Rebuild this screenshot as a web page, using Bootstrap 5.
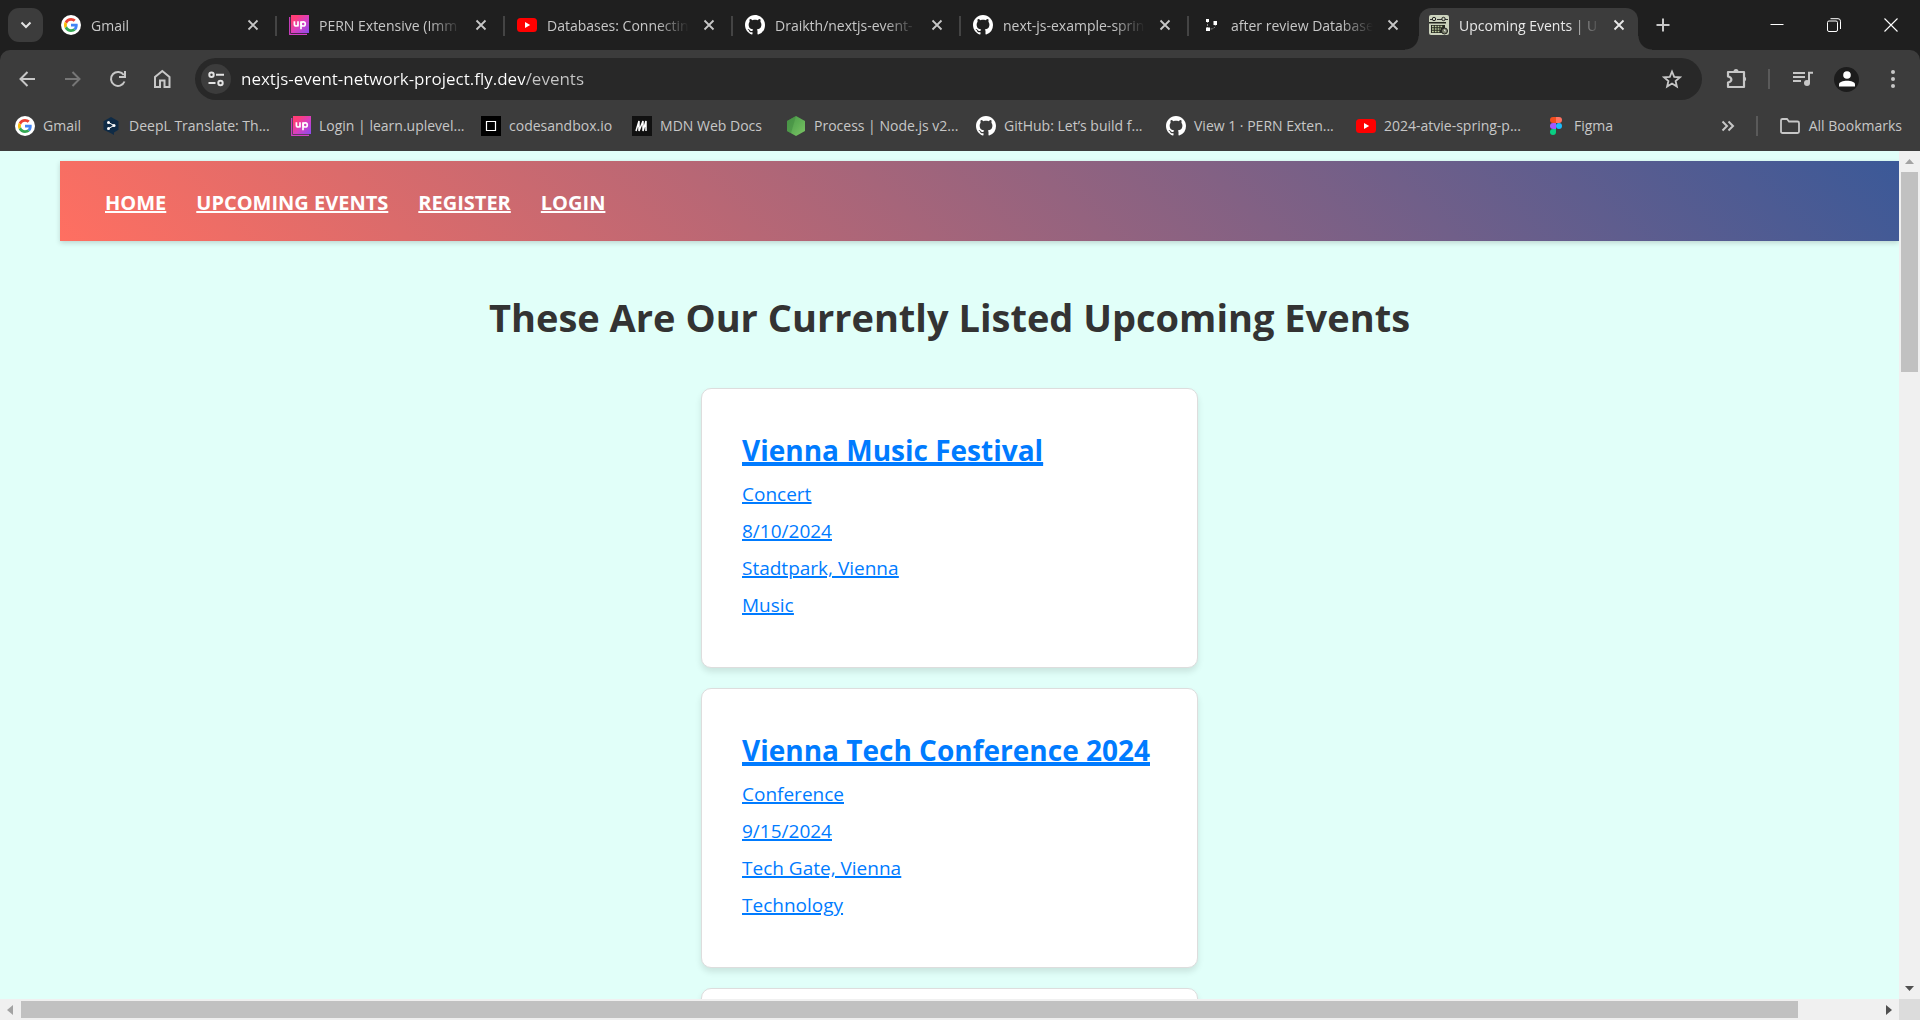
<!DOCTYPE html>
<html lang="en">
<head>
<meta charset="utf-8">
<meta name="viewport" content="width=device-width, initial-scale=1">
<title>Upcoming Events</title>
<link href="https://cdn.jsdelivr.net/npm/bootstrap@5.3.0/dist/css/bootstrap.min.css" rel="stylesheet">
<style>
  body { font-family: "Open Sans", "Noto Sans", sans-serif; background: #1f1f1f; }
  button { padding: 0; border: 0; background: none; color: inherit; }
  svg { display: block; flex: none; }

  /* tab strip */
  .tab-strip { height: 50px; padding-left: 8px; color: #c7c7c7; font-size: 14px; }
  .tab-search { width: 35px; height: 34px; border-radius: 11px; background: #3c3c3c; margin-right: 8px; }
  .tabs { min-width: 0; }
  .chrome-tab { width: 228px; min-width: 0; height: 42px; padding: 0 20px 0 10px; position: relative; }
  .chrome-tab .tab-label { mask-image: linear-gradient(to right, #000 110px, transparent 142px); -webkit-mask-image: linear-gradient(to right, #000 110px, transparent 142px); }
  .chrome-tab::after { content: ""; position: absolute; right: 2px; top: 8px; width: 2px; height: 20px; background: #444; }
  .chrome-tab.before-current::after { display: none; }
  .chrome-tab.current { width: 219px; padding-right: 13px; background: #3c3c3c; color: #e8e8e8; border-radius: 12px 12px 0 0; }
  .chrome-tab.current::before, .chrome-tab.current::after { content: ""; position: absolute; top: auto; bottom: 0; width: 14px; height: 14px; }
  .chrome-tab.current::before { left: -14px; background: radial-gradient(circle at 0 0, transparent 13px, #3c3c3c 14px); }
  .chrome-tab.current::after { right: -14px; background: radial-gradient(circle at 100% 0, transparent 13px, #3c3c3c 14px); }
  .tab-row { height: 26px; margin-bottom: 8px; gap: 10px; }
  .new-tab { margin-left: 18px; }
  .win-buttons { gap: 43px; padding-right: 22px; color: #fff; }

  /* toolbar */
  .toolbar { background: #3c3c3c; border-radius: 10px 10px 0 0; color: #c7c7c7; }
  .address-row { height: 58px; padding: 0 19px 0 16px; }
  .nav-buttons { gap: 23px; margin-right: 22px; }
  .omnibox { height: 42px; border-radius: 21px; background: #282828; padding: 0 20px 0 6px; }
  .site-info { width: 30px; height: 30px; border-radius: 50%; background: #3c3c3c; margin-right: 10px; }
  .url-field { border: 0; outline: 0; padding: 0; min-width: 0; font-size: 17px; color: transparent;
    background: linear-gradient(to right, #fff 284px, #c7c7c7 284px); -webkit-background-clip: text; background-clip: text; }
  .tool-sep { width: 2px; height: 20px; background: #5a5a5a; }
  .tool-icons { margin-left: 24px; }
  .tool-icons .tool-sep { margin: 0 23px 0 20px; }
  .avatar { width: 25px; height: 25px; border-radius: 50%; background: #1c1c1c; margin: 0 26px 0 21px; }
  .bookmarks { height: 43px; padding: 0 18px 8px 15px; gap: 20px; font-size: 14px; }
  .bookmarks a { color: #c7c7c7; gap: 8px; }
  .long-label { width: 142px; }
  .bookmark-end { gap: 21px; }

  /* page */
  .page-view { background: #e1fff9; min-height: 0; }
  .site-nav { margin: 10px 0 0 60px; height: 80px; padding: 4px 45px 0; gap: 30px;
    background: linear-gradient(45deg, #ff6f61, #3b5998); box-shadow: 0 2px 5px rgba(0,0,0,.16); }
  .site-nav a { color: #fff; font-weight: 700; font-size: 20px; text-decoration-thickness: 2px; }
  .page-title { color: #333; font-size: 38px; font-weight: 700; line-height: 48px; margin: 52px 0 47px; }
  .event-list { gap: 20px; }
  .event-card { width: 497px; height: 280px; padding: 38px 40px; background: #fff; border: 1px solid #ddd; border-radius: 10px;
    box-shadow: 0 4px 6px rgba(0,0,0,.1); color: #007bff; font-size: 19px; line-height: 37px; text-decoration-thickness: 2px; }
  .event-card h2 { font-size: 28px; font-weight: 700; line-height: 46px; margin-bottom: 3px; text-decoration: underline 3px; }
  .event-card div { text-decoration: underline 2px; }

  /* scrollbars */
  .scroll-v { width: 21px; background: #f0f0f0; padding: 8px 0; }
  .scroll-v .thumb { width: 17px; height: 24%; background: #c1c1c1; }
  .scroll-h { height: 21px; background: #f0f0f0; }
  .scroll-h .track { padding: 0 7px; }
  .scroll-h .thumb-rail { height: 17px; padding-right: 80px; margin: 0 8px; }
  .scroll-h .thumb { background: #c1c1c1; }
  .scroll-corner { width: 21px; background: #dcdcdc; }
</style>
<script src="https://cdn.jsdelivr.net/npm/bootstrap@5.3.0/dist/js/bootstrap.bundle.min.js"></script>
</head>
<body class="d-flex flex-column vh-100 overflow-hidden">

<svg width="0" height="0" class="position-absolute" aria-hidden="true">
  <defs>
    <linearGradient id="upFill" x1="0" y1="0" x2="1" y2="1"><stop offset=".2" stop-color="#ff3d78"/><stop offset=".55" stop-color="#d83fc0"/><stop offset="1" stop-color="#8a4df0"/></linearGradient>
    <linearGradient id="nodeFill" x1="0" y1="0" x2="1" y2="1"><stop offset="0" stop-color="#4b9a48"/><stop offset=".5" stop-color="#5fae55"/><stop offset="1" stop-color="#7cc465"/></linearGradient>
  </defs>
  <symbol id="google" viewBox="0 0 20 20"><circle cx="10" cy="10" r="10" fill="#fff"/>
    <g transform="translate(3 3) scale(.2917)"><path fill="#EA4335" d="M24 9.5c3.54 0 6.71 1.22 9.21 3.6l6.85-6.85C35.9 2.38 30.47 0 24 0 14.62 0 6.51 5.38 2.56 13.22l7.98 6.19C12.43 13.72 17.74 9.5 24 9.5z"/><path fill="#4285F4" d="M46.98 24.55c0-1.57-.15-3.09-.38-4.55H24v9.02h12.94c-.58 2.96-2.26 5.48-4.78 7.18l7.73 6c4.51-4.18 7.09-10.36 7.09-17.65z"/><path fill="#FBBC05" d="M10.53 28.59c-.48-1.45-.76-2.99-.76-4.59s.27-3.14.76-4.59l-7.98-6.19C.92 16.46 0 20.12 0 24c0 3.88.92 7.54 2.56 10.78l7.97-6.19z"/><path fill="#34A853" d="M24 48c6.48 0 11.93-2.13 15.89-5.81l-7.73-6c-2.15 1.45-4.92 2.3-8.16 2.3-6.26 0-11.57-4.22-13.47-9.91l-7.98 6.19C6.51 42.62 14.62 48 24 48z"/></g></symbol>
  <symbol id="github" viewBox="0 0 16 16"><path fill="#fff" d="M8 0C3.58 0 0 3.58 0 8c0 3.54 2.29 6.53 5.47 7.59.4.07.55-.17.55-.38 0-.19-.01-.82-.01-1.49-2.01.37-2.53-.49-2.69-.94-.09-.23-.48-.94-.82-1.13-.28-.15-.68-.52-.01-.53.63-.01 1.08.58 1.23.82.72 1.21 1.87.87 2.33.66.07-.52.28-.87.51-1.07-1.78-.2-3.64-.89-3.64-3.95 0-.87.31-1.59.82-2.15-.08-.2-.36-1.02.08-2.12 0 0 .67-.21 2.2.82.64-.18 1.32-.27 2-.27s1.36.09 2 .27c1.53-1.04 2.2-.82 2.2-.82.44 1.1.16 1.92.08 2.12.51.56.82 1.27.82 2.15 0 3.07-1.87 3.75-3.65 3.95.29.25.54.73.54 1.48 0 1.07-.01 1.93-.01 2.2 0 .21.15.46.55.38A8.01 8.01 0 0 0 16 8c0-4.42-3.58-8-8-8z"/></symbol>
  <symbol id="uplevel" viewBox="0 0 20 20"><path d="M.7 2v17.3H18" fill="none" stroke="#d43fc8" stroke-width="1.2"/><path fill="url(#upFill)" d="M2 0h18v18H2z"/><g fill="none" stroke="#fff" stroke-width="1.7"><path d="M5.4 6.200v3c0 2.400 3.600 2.400 3.600 0v-3M9 6.200v5.400M12 14.300V6.200"/><ellipse cx="14.200" cy="8.900" rx="2.100" ry="2.100"/></g></symbol>
  <symbol id="youtube" viewBox="0 0 20 20"><rect y="3" width="20" height="14" rx="3.5" fill="#f00"/><path fill="#fff" d="M8 7l5.2 3L8 13z"/></symbol>
  <symbol id="close" viewBox="0 0 12 12"><path d="M1.5 1.5l9 9M10.5 1.5l-9 9" stroke="currentColor" stroke-width="1.8" fill="none"/></symbol>
</svg>

<header class="flex-shrink-0">
  <div class="tab-strip d-flex align-items-end">
    <button class="tab-search d-flex align-items-center justify-content-center align-self-start mt-2" aria-label="Search tabs"><svg width="12" height="8" viewBox="0 0 12 8"><path d="M1.5 1.5L6 6l4.500-4.500" fill="none" stroke="#e3e3e3" stroke-width="2"/></svg></button>
    <div class="tabs d-flex align-items-end" role="tablist">
      <div class="chrome-tab d-flex align-items-center" role="tab"><div class="tab-row d-flex align-items-center flex-grow-1"><svg width="20" height="20"><use href="#google"/></svg><span class="tab-label flex-grow-1 text-nowrap">Gmail</span><button aria-label="Close tab"><svg width="12" height="12"><use href="#close"/></svg></button></div></div>
      <div class="chrome-tab d-flex align-items-center" role="tab"><div class="tab-row d-flex align-items-center flex-grow-1"><svg width="20" height="20"><use href="#uplevel"/></svg><span class="tab-label flex-grow-1 text-nowrap">PERN Extensive (Imm</span><button aria-label="Close tab"><svg width="12" height="12"><use href="#close"/></svg></button></div></div>
      <div class="chrome-tab d-flex align-items-center" role="tab"><div class="tab-row d-flex align-items-center flex-grow-1"><svg width="20" height="20"><use href="#youtube"/></svg><span class="tab-label flex-grow-1 text-nowrap">Databases: Connectin</span><button aria-label="Close tab"><svg width="12" height="12"><use href="#close"/></svg></button></div></div>
      <div class="chrome-tab d-flex align-items-center" role="tab"><div class="tab-row d-flex align-items-center flex-grow-1"><svg width="20" height="20"><use href="#github"/></svg><span class="tab-label flex-grow-1 text-nowrap">Draikth/nextjs-event-</span><button aria-label="Close tab"><svg width="12" height="12"><use href="#close"/></svg></button></div></div>
      <div class="chrome-tab d-flex align-items-center" role="tab"><div class="tab-row d-flex align-items-center flex-grow-1"><svg width="20" height="20"><use href="#github"/></svg><span class="tab-label flex-grow-1 text-nowrap">next-js-example-sprin</span><button aria-label="Close tab"><svg width="12" height="12"><use href="#close"/></svg></button></div></div>
      <div class="chrome-tab before-current d-flex align-items-center" role="tab"><div class="tab-row d-flex align-items-center flex-grow-1"><svg width="20" height="20" viewBox="0 0 20 20"><path d="M6.500 6v8M6.500 14h3.500c3 0 4.500-2 4.500-5" fill="none" stroke="#888" stroke-width="1" stroke-dasharray="2 1"/><path fill="#fff" d="M5 4h3v3H5zM5 12.500h4v3.500H5zM12.500 6h3.500v4h-3.500z"/></svg><span class="tab-label flex-grow-1 text-nowrap">after review Database</span><button aria-label="Close tab"><svg width="12" height="12"><use href="#close"/></svg></button></div></div>
      <div class="chrome-tab current d-flex align-items-center" role="tab" aria-selected="true"><div class="tab-row d-flex align-items-center flex-grow-1">
        <svg width="20" height="20" viewBox="0 0 20 20"><rect width="20" height="20" rx="2" fill="#ccd3bd"/><path d="M1 4.500h5M8 4.500h5M15 4.500h4" stroke="#333" stroke-width="1.200"/><circle cx="5" cy="4" r="1.700" fill="#ccd3bd" stroke="#222"/><circle cx="14.500" cy="4" r="1.700" fill="#ccd3bd" stroke="#222"/><path fill="#252820" d="M0 7h17v1.500H0zM2 10h14v8H2z"/><path d="M3 11.500h11M3 14h9M3 16.500h8" stroke="#bfcda0" stroke-width="1.600" stroke-dasharray="1.800 1"/><circle cx="15.500" cy="16" r="3" fill="#777d68" stroke="#222"/><path d="M15.500 14.500V16h1.500" fill="none" stroke="#eee" stroke-width=".8"/></svg>
        <span class="tab-label flex-grow-1 text-nowrap">Upcoming Events | U</span><button aria-label="Close tab"><svg width="12" height="12"><use href="#close"/></svg></button></div></div>
    </div>
    <div class="d-flex align-items-center flex-grow-1 h-100">
      <button class="new-tab" aria-label="New tab"><svg width="14" height="14" viewBox="0 0 14 14"><path d="M7 .5v13M.5 7h13" stroke="#c7c7c7" stroke-width="2"/></svg></button>
      <div class="win-buttons d-flex align-items-center ms-auto">
        <button aria-label="Minimize"><svg width="14" height="14" viewBox="0 0 14 14"><path d="M.5 6.500h13" stroke="#fff"/></svg></button>
        <button aria-label="Restore"><svg width="14" height="14" viewBox="0 0 14 14"><rect x=".5" y="3" width="10" height="10.500" rx="1.500" fill="none" stroke="#fff"/><path d="M3.500.7h7.500a2.500 2.500 0 0 1 2.500 2.500V11" fill="none" stroke="#fff"/></svg></button>
        <button aria-label="Close"><svg width="14" height="14" viewBox="0 0 14 14"><path d="M.5.5l13 13M13.500.5l-13 13" stroke="#fff" stroke-width="1.100"/></svg></button>
      </div>
    </div>
  </div>

  <div class="toolbar">
    <div class="address-row d-flex align-items-center">
      <div class="nav-buttons d-flex align-items-center">
        <button aria-label="Back"><svg width="22" height="22" viewBox="0 0 22 22"><path d="M19 11H5M11.500 4l-7 7 7 7" fill="none" stroke="#c7c7c7" stroke-width="2"/></svg></button>
        <button aria-label="Forward"><svg width="22" height="22" viewBox="0 0 22 22"><path d="M4 11h14M11.500 4l7 7-7 7" fill="none" stroke="#767676" stroke-width="2"/></svg></button>
        <button aria-label="Reload"><svg width="22" height="22" viewBox="0 0 22 22"><path d="M18.500 13.500A7 7 0 1 1 17.800 7M19 3v6h-6" fill="none" stroke="#c7c7c7" stroke-width="2"/></svg></button>
        <button aria-label="Home"><svg width="22" height="22" viewBox="0 0 22 22"><path d="M4 19V9l7.300-6L18.500 9v10h-5v-6.500H9V19z" fill="none" stroke="#c7c7c7" stroke-width="2"/></svg></button>
      </div>
      <div class="omnibox d-flex align-items-center flex-grow-1">
        <button class="site-info d-flex align-items-center justify-content-center flex-shrink-0" aria-label="Site information"><svg width="18" height="16" viewBox="0 0 18 16"><g fill="none" stroke="#e3e3e3" stroke-width="2"><circle cx="4.500" cy="3.800" r="2.200"/><path d="M9 3.800h8M1.500 12h7"/><circle cx="13.500" cy="12" r="2.200"/></g></svg></button>
        <input class="url-field flex-grow-1" type="text" aria-label="Address" value="nextjs-event-network-project.fly.dev/events">
        <button aria-label="Bookmark this page"><svg width="20" height="20" viewBox="0 0 20 20"><path d="M10 2.500l2.200 5.300 5.700.5-4.300 3.700 1.300 5.600-4.900-3-4.900 3 1.300-5.600L2.100 8.300l5.700-.5z" fill="none" stroke="#c7c7c7" stroke-width="1.800"/></svg></button>
      </div>
      <div class="tool-icons d-flex align-items-center">
        <button aria-label="Extensions"><svg width="22" height="22" viewBox="0 0 22 22"><path d="M2 4h16v15H2v-4.500c4.500-1 4.500-5 0-6z" fill="none" stroke="#c7c7c7" stroke-width="2.200" stroke-linejoin="round"/><path fill="#c7c7c7" d="M7.500 3.500a2.500 2.500 0 0 1 5 0zM18.500 8.500a2.700 2.700 0 0 1 0 5z"/></svg></button>
        <span class="tool-sep"></span>
        <button aria-label="Media controls"><svg width="20" height="16" viewBox="0 0 20 16"><path d="M0 2h12M0 6h12M0 10h8M16 12V1.800h4" fill="none" stroke="#c7c7c7" stroke-width="2"/><circle cx="14" cy="12" r="3" fill="#c7c7c7"/></svg></button>
        <button class="avatar d-flex align-items-center justify-content-center" aria-label="Profile"><svg width="16" height="16" viewBox="0 0 16 16"><circle cx="8" cy="4" r="3.800" fill="#fff"/><path fill="#fff" d="M0 15.500v-2C0 8.500 16 8.500 16 13.500v2z"/></svg></button>
        <button aria-label="Menu"><svg width="16" height="20" viewBox="0 0 16 20"><g fill="#c7c7c7"><circle cx="8" cy="3" r="2"/><circle cx="8" cy="10" r="2"/><circle cx="8" cy="17" r="2"/></g></svg></button>
      </div>
    </div>

    <nav class="bookmarks d-flex align-items-center text-nowrap" aria-label="Bookmarks">
      <a href="#" class="d-flex align-items-center text-decoration-none"><svg width="20" height="20"><use href="#google"/></svg>Gmail</a>
      <a href="#" class="d-flex align-items-center text-decoration-none"><svg width="20" height="20" viewBox="0 0 20 20"><path fill="#0f2b46" d="M10 1l7.500 4.300v8.500L13 16.400V19l-3.500-2L2.500 13.800V5.300z"/><path d="M7.500 6.500L13 9.500 7.500 12.500" fill="none" stroke="#fff"/><g fill="#fff"><circle cx="7.500" cy="6.500" r="1.500"/><circle cx="13" cy="9.500" r="1.500"/><circle cx="7.500" cy="12.500" r="1.500"/></g></svg><span class="long-label">DeepL Translate: Th...</span></a>
      <a href="#" class="d-flex align-items-center text-decoration-none"><svg width="20" height="20"><use href="#uplevel"/></svg><span class="long-label">Login | learn.uplevel...</span></a>
      <a href="#" class="d-flex align-items-center text-decoration-none"><svg width="20" height="20" viewBox="0 0 20 20"><path d="M0 0h20v20H0z"/><path d="M5.500 5.500h9v9h-9z" fill="none" stroke="#fff" stroke-width="1.200"/></svg>codesandbox.io</a>
      <a href="#" class="d-flex align-items-center text-decoration-none me-1"><svg width="20" height="20" viewBox="0 0 20 20"><path fill="#111" d="M0 0h20v20H0z"/><path d="M4 15L7 5v10l4-10v10l3-10v10" fill="none" stroke="#fff" stroke-width="1.500"/></svg>MDN Web Docs</a>
      <a href="#" class="d-flex align-items-center text-decoration-none"><svg width="20" height="20" viewBox="0 0 20 20"><path fill="url(#nodeFill)" d="M10 0l9 5v10l-9 5-9-5V5z"/><path fill="#3f873f" opacity=".5" d="M10 0L1 5v10l4 2.200z"/></svg><span class="long-label">Process | Node.js v2...</span></a>
      <a href="#" class="d-flex align-items-center text-decoration-none"><svg width="20" height="20"><use href="#github"/></svg><span class="long-label">GitHub: Let’s build f...</span></a>
      <a href="#" class="d-flex align-items-center text-decoration-none"><svg width="20" height="20"><use href="#github"/></svg><span class="long-label">View 1 · PERN Exten...</span></a>
      <a href="#" class="d-flex align-items-center text-decoration-none"><svg width="20" height="20"><use href="#youtube"/></svg><span class="long-label">2024-atvie-spring-p...</span></a>
      <a href="#" class="d-flex align-items-center text-decoration-none"><svg width="20" height="20" viewBox="0 0 20 20"><path fill="#f24e1e" d="M10 1H7a3 3 0 0 0 0 6h3z"/><path fill="#ff7262" d="M10 1h3a3 3 0 0 1 0 6h-3z"/><path fill="#a259ff" d="M10 7H7a3 3 0 0 0 0 6h3z"/><circle cx="13" cy="10" r="3" fill="#1abcfe"/><path fill="#0acf83" d="M10 13H7a3 3 0 1 0 3 3z"/></svg>Figma</a>
      <div class="bookmark-end d-flex align-items-center ms-auto">
        <button aria-label="More bookmarks"><svg width="14" height="12" viewBox="0 0 14 12"><path d="M1.500 1.500L6 6l-4.500 4.500M7.500 1.500L12 6l-4.500 4.500" fill="none" stroke="#c7c7c7" stroke-width="2"/></svg></button>
        <span class="tool-sep"></span>
        <a href="#" class="d-flex align-items-center text-decoration-none"><svg width="22" height="18" viewBox="0 0 22 18"><path d="M2 3.500a1.500 1.500 0 0 1 1.500-1.500H8l2 2.500h8.500A1.500 1.500 0 0 1 20 6v8.500a1.500 1.500 0 0 1-1.500 1.500h-15A1.500 1.500 0 0 1 2 14.500z" fill="none" stroke="#c7c7c7" stroke-width="1.800"/></svg>All Bookmarks</a>
      </div>
    </nav>
  </div>
</header>

<div class="page-view d-flex flex-grow-1">
  <main class="flex-grow-1 overflow-hidden">
    <nav class="site-nav d-flex align-items-center" aria-label="Main">
      <a href="#">HOME</a><a href="#">UPCOMING EVENTS</a><a href="#">REGISTER</a><a href="#">LOGIN</a>
    </nav>
    <h1 class="page-title text-center">These Are Our Currently Listed Upcoming Events</h1>
    <div class="event-list d-flex flex-column align-items-center">
      <a href="#" class="event-card d-block"><h2>Vienna Music Festival</h2><div>Concert</div><div>8/10/2024</div><div>Stadtpark, Vienna</div><div>Music</div></a>
      <a href="#" class="event-card d-block"><h2 class="text-nowrap">Vienna Tech Conference 2024</h2><div>Conference</div><div>9/15/2024</div><div>Tech Gate, Vienna</div><div>Technology</div></a>
      <a href="#" class="event-card d-block" aria-label="Next event"></a>
    </div>
  </main>
  <div class="scroll-v d-flex flex-column align-items-center">
    <svg width="9" height="5" viewBox="0 0 9 5"><path d="M0 5L4.500 0 9 5z" fill="#a3a3a3"/></svg>
    <div class="thumb mt-2"></div>
    <svg class="mt-auto" width="9" height="5" viewBox="0 0 9 5"><path d="M0 0l4.500 5L9 0z" fill="#505050"/></svg>
  </div>
</div>
<div class="scroll-h d-flex flex-shrink-0">
  <div class="track d-flex align-items-center flex-grow-1">
    <svg width="6" height="10" viewBox="0 0 6 10"><path d="M6 0L0 5l6 5z" fill="#a3a3a3"/></svg>
    <div class="thumb-rail d-flex flex-grow-1"><div class="thumb flex-grow-1"></div></div>
    <svg width="6" height="10" viewBox="0 0 6 10"><path d="M0 0l6 5-6 5z" fill="#505050"/></svg>
  </div>
  <div class="scroll-corner"></div>
</div>
</body>
</html>
